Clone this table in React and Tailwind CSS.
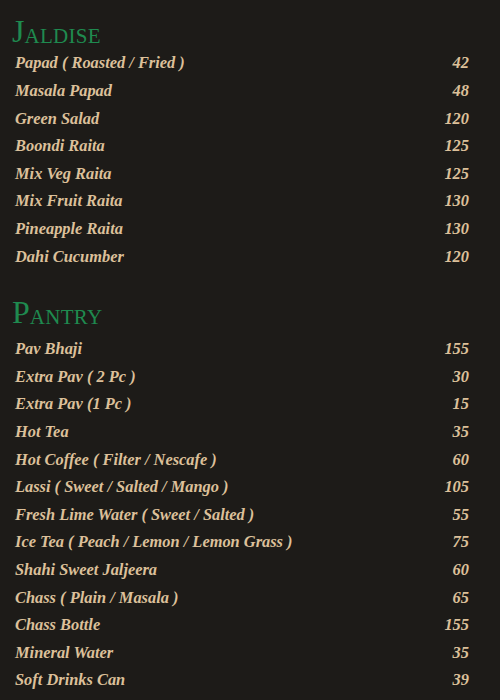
import React from "react";

const jaldise = [
  ["Papad ( Roasted / Fried )", "42"],
  ["Masala Papad", "48"],
  ["Green Salad", "120"],
  ["Boondi Raita", "125"],
  ["Mix Veg Raita", "125"],
  ["Mix Fruit Raita", "130"],
  ["Pineapple Raita", "130"],
  ["Dahi Cucumber", "120"],
];

const pantry = [
  ["Pav Bhaji", "155"],
  ["Extra Pav ( 2 Pc )", "30"],
  ["Extra Pav (1 Pc )", "15"],
  ["Hot Tea", "35"],
  ["Hot Coffee ( Filter / Nescafe )", "60"],
  ["Lassi ( Sweet / Salted / Mango )", "105"],
  ["Fresh Lime Water ( Sweet / Salted )", "55"],
  ["Ice Tea ( Peach / Lemon / Lemon Grass )", "75"],
  ["Shahi Sweet Jaljeera", "60"],
  ["Chass ( Plain / Masala )", "65"],
  ["Chass Bottle", "155"],
  ["Mineral Water", "35"],
  ["Soft Drinks Can", "39"],
];

function Heading({ first, rest }) {
  return (
    <div className="h-[34px] flex items-end pl-[12px] text-[#1f8a4f] font-['Liberation_Serif',serif] leading-none">
      <span className="text-[32px]">{first}</span>
      <span className="text-[21px] tracking-[0.3px] uppercase">{rest}</span>
    </div>
  );
}

function Rows({ items }) {
  return (
    <div className="flex flex-col">
      {items.map(([n, p]) => (
        <div key={n} className="h-[27.6px] flex items-center justify-between pl-[15px] pr-[31px] text-[16.4px] italic font-semibold text-[#dcc09a] font-['Liberation_Serif',serif]">
          <span>{n}</span>
          <span>{p}</span>
        </div>
      ))}
    </div>
  );
}

export default function App() {
  return (
    <div className="w-[500px] h-[700px] overflow-hidden bg-[#1d1b18]">
      <div className="pt-[13px]">
        <Heading first="J" rest="aldise" />
        <div className="h-[3px]" />
        <Rows items={jaldise} />
      </div>
      <div className="pt-[23px]">
        <Heading first="P" rest="antry" />
        <div className="h-[8px]" />
        <Rows items={pantry} />
      </div>
    </div>
  );
}
